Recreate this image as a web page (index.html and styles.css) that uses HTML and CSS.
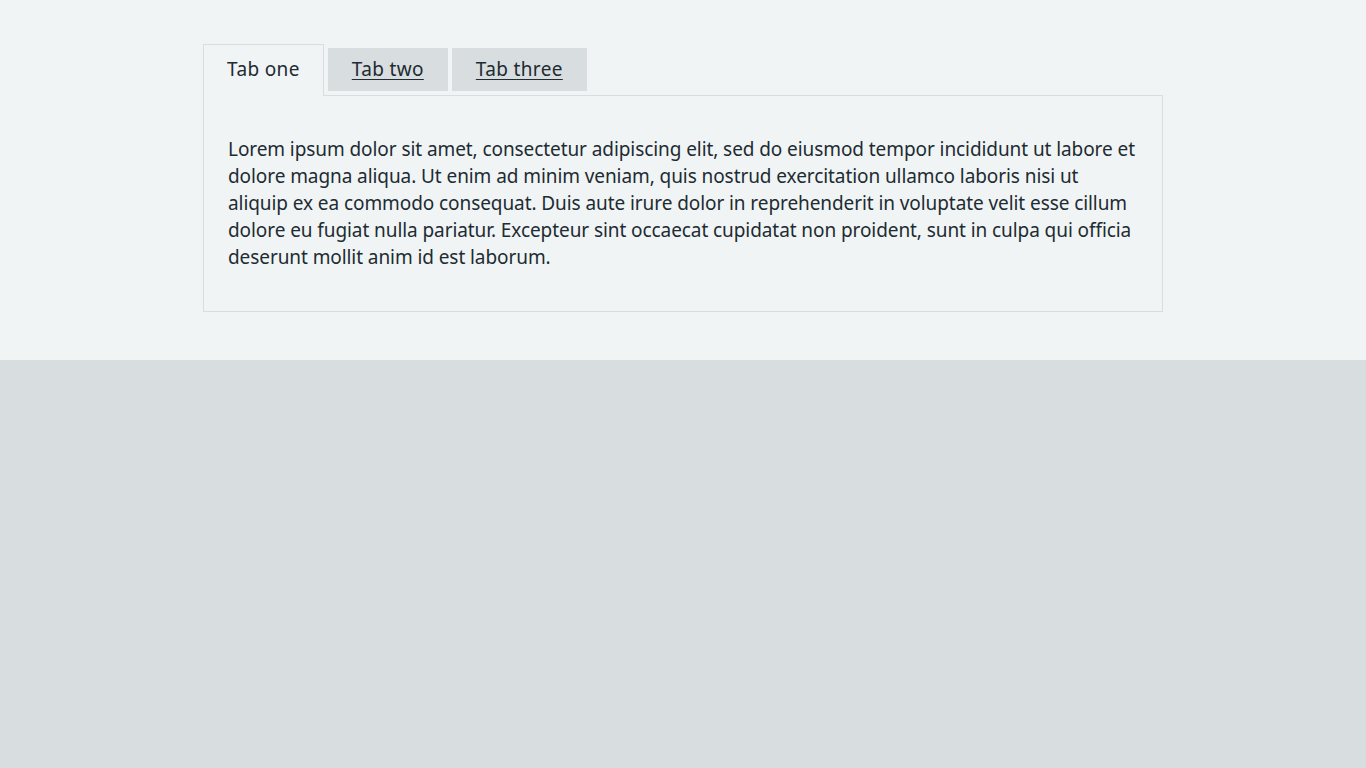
FILE: index.html
```html
<!DOCTYPE html>
<html lang="en">
<head>
<meta charset="utf-8">
<title>Tabs</title>
<link rel="stylesheet" href="styles.css">
</head>
<body>
<main class="page">
  <div class="tabs">
    <ul class="tabs__list">
      <li class="tabs__item tabs__item--selected"><a class="tabs__tab" href="#tab-one">Tab one</a></li>
      <li class="tabs__item"><a class="tabs__tab" href="#tab-two">Tab two</a></li>
      <li class="tabs__item"><a class="tabs__tab" href="#tab-three">Tab three</a></li>
    </ul>
    <div class="tabs__panel" id="tab-one">
      <p class="body">Lorem ipsum dolor sit amet, consectetur adipiscing elit, sed do eiusmod tempor incididunt ut labore et dolore magna aliqua. Ut enim ad minim veniam, quis nostrud exercitation ullamco laboris nisi ut aliquip ex ea commodo consequat. Duis aute irure dolor in reprehenderit in voluptate velit esse cillum dolore eu fugiat nulla pariatur. Excepteur sint occaecat cupidatat non proident, sunt in culpa qui officia deserunt mollit anim id est laborum.</p>
    </div>
  </div>
</main>
</body>
</html>
```

FILE: styles.css
```css
html {
  background: #d8dde0;
}
body {
  margin: 0;
  font-family: "Noto Sans", "Open Sans", sans-serif;
  color: #212b32;
}
.page {
  background: #f0f4f5;
  padding: 44px 0 48px;
}
.tabs {
  width: 960px;
  margin: 0 auto;
}
.tabs__list {
  list-style: none;
  margin: 0;
  padding: 0;
  display: flex;
  align-items: flex-start;
  gap: 4px;
}
.tabs__item {
  margin-top: 4px;
  background: #d8dde0;
}
.tabs__tab {
  display: block;
  padding: 9px 24px;
  font-size: 19px;
  line-height: 25px;
  letter-spacing: 0.35px;
  color: #212b32;
  text-decoration: underline;
  text-underline-offset: 3px;
  text-decoration-thickness: 1px;
}
.tabs__item--selected {
  margin-top: 0;
  margin-bottom: -1px;
  position: relative;
  background: #f0f4f5;
  border: 1px solid #d8dde0;
  border-bottom: 0;
}
.tabs__item--selected .tabs__tab {
  padding: 12px 23px 14px;
  text-decoration: none;
}
.tabs__panel {
  border: 1px solid #d8dde0;
  padding: 40px 24px;
}
.body {
  margin: 0;
  font-size: 19px;
  line-height: 27px;
  letter-spacing: -0.08px;
}
```
